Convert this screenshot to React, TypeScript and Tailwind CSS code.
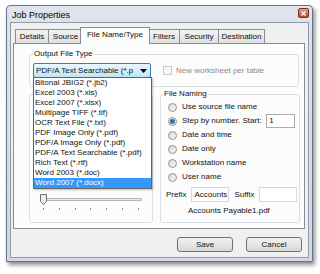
import React from "react"

const formats = [
  "Bitonal JBIG2 (*.jb2)",
  "Excel 2003 (*.xls)",
  "Excel 2007 (*.xlsx)",
  "Multipage TIFF  (*.tif)",
  "OCR Text File (*.txt)",
  "PDF Image Only (*.pdf)",
  "PDF/A Image Only (*.pdf)",
  "PDF/A Text Searchable (*.pdf)",
  "Rich Text (*.rtf)",
  "Word 2003 (*.doc)",
  "Word 2007 (*.docx)",
]

const naming = [
  "Use source file name",
  "Step by number. Start:",
  "Date and time",
  "Date only",
  "Workstation name",
  "User name",
]

function Radio({ checked }: { checked?: boolean }) {
  return (
    <div className="w-[9px] h-[9px] rounded-full border border-[#8f9192] bg-gradient-to-br from-[#d9d9d9] to-[#f7f7f7] flex items-center justify-center shrink-0">
      {checked && <div className="w-[5px] h-[5px] rounded-full bg-gradient-to-br from-[#2a5d8c] to-[#3d8bd0]" />}
    </div>
  )
}

function Tab({ label, w, last }: { label: string; w: string; last?: boolean }) {
  return (
    <div
      className={`${w} h-[14px] border-l border-t ${last ? "border-r" : ""} border-[#898c95] bg-gradient-to-b from-[#f3f3f3] to-[#dfdfdf] flex items-center justify-center`}
    >
      {label}
    </div>
  )
}

export default function App() {
  return (
    <div
      className="w-[320px] h-[274px] bg-white pl-[6px] pt-[5px] text-[8px] leading-[10px] text-[#111]"
      style={{ fontFamily: '"Liberation Sans", Arial, sans-serif' }}
    >
      <div className="w-[307px] h-[257px] border border-[#6a7184] rounded-t-[4px] bg-gradient-to-b from-[#dfe3ec] to-[#d3d8e4] shadow-[2px_3px_4px_rgba(0,0,0,0.45)] flex flex-col px-[3px] pb-[3px]">
        {/* Title bar */}
        <div className="h-[16px] flex items-start shrink-0">
          <span className="pl-[2px] mt-[4px] text-[9px] leading-[10px] text-black">Job Properties</span>
          <div className="ml-auto mt-[2px] w-[11px] h-[10px] rounded-[2px] border border-[#7b3024] bg-gradient-to-b from-[#e99a84] to-[#c4442c] flex items-center justify-center">
            <svg width="5" height="5" viewBox="0 0 5 5">
              <path d="M0.5 0.5 L4.5 4.5 M4.5 0.5 L0.5 4.5" stroke="white" strokeWidth="1.3" />
            </svg>
          </div>
        </div>

        {/* Client area */}
        <div className="flex-1 border border-[#8e99ab] bg-[#f0f0f0] flex flex-col pt-[4px] pl-[2px] pr-[3px] pb-[4px]">
          {/* Tabs */}
          <div className="h-[16px] flex items-end pl-[2px] shrink-0">
            <Tab label="Details" w="w-[33px]" />
            <Tab label="Source" w="w-[34px]" />
            <div className="relative z-10 -ml-[2px] -mr-[2px] -mb-px w-[70px] h-[17px] border-l border-t border-r border-[#898c95] bg-[#fcfcfc] flex items-center justify-center pb-[2px]">
              File Name/Type
            </div>
            <Tab label="Filters" w="w-[31px]" />
            <Tab label="Security" w="w-[39px]" />
            <Tab label="Destination" w="w-[47px]" last />
          </div>

          {/* Panel */}
          <div className="h-[186px] border border-[#898c95] bg-[#fcfcfc] pl-[15px] pr-[6px] pt-[5px] flex flex-col shrink-0">
            <fieldset className="w-[270px] h-[38px] border border-[#d5dfe5] rounded-[3px] px-[3px]">
              <legend className="px-px">Output File Type</legend>
              <div className="flex items-center mt-[4px]">
                <div className="relative z-20">
                  <div className="w-[118px] h-[15px] border border-[#3c7fb1] rounded-[2px] bg-gradient-to-b from-[#eaf6fd] to-[#bee6fd] flex items-center pl-[2px] pr-[3px]">
                    <span className="flex-1 whitespace-nowrap">PDF/A Text Searchable (*.p</span>
                    <svg width="7" height="4" viewBox="0 0 7 4" className="ml-[2px] shrink-0">
                      <path d="M0 0 H7 L3.5 4 Z" fill="#000" />
                    </svg>
                  </div>
                  <div className="absolute left-0 top-[14px] w-[119px] border border-[#646464] bg-white shadow-[1px_1px_2px_rgba(0,0,0,0.25)]">
                    {formats.map((f, i) => (
                      <div
                        key={f}
                        className={`h-[10px] pl-[1px] whitespace-nowrap ${i === formats.length - 1 ? "bg-[#3399ff] text-white" : ""}`}
                      >
                        {f}
                      </div>
                    ))}
                  </div>
                </div>
                <div className="ml-[12px] w-[9px] h-[9px] border border-[#c8c8c8] bg-[#f6f6f6]" />
                <span className="ml-[4px] text-[#8a8a8a]">New worksheet per table</span>
              </div>
            </fieldset>

            <div className="flex mt-[2px] gap-[7px]">
              <fieldset className="w-[124px] h-[134px] border border-[#d5dfe5] rounded-[3px] flex flex-col justify-end px-[10px] pb-[12px]">
                <legend className="px-px">&nbsp;</legend>
                <div className="relative h-[16px] w-[102px]">
                  <div className="absolute left-0 right-0 top-[4px] h-[3px] border border-[#b4b4b4] bg-[#e7eaea] rounded-[1px]" />
                  <svg width="7" height="11" viewBox="0 0 7 11" className="absolute left-[0px] top-0">
                    <path d="M0.5 0.5 H6.5 V7.5 L3.5 10.5 L0.5 7.5 Z" fill="#ececec" stroke="#707070" />
                  </svg>
                  <div className="absolute left-0 right-0 top-[14px] flex justify-between px-[3px]">
                    {Array.from({ length: 7 }).map((_, i) => (
                      <div key={i} className="w-px h-[2px] bg-[#8c8c8c]" />
                    ))}
                  </div>
                </div>
              </fieldset>

              <fieldset className="w-[139px] h-[134px] border border-[#d5dfe5] rounded-[3px] px-[2px]">
                <legend className="px-px">File Naming</legend>
                <div className="flex flex-col pt-px pl-[5px]">
                  {naming.map((n, i) => (
                    <div key={n} className="h-[14px] flex items-center">
                      <Radio checked={i === 1} />
                      <span className="ml-[5px]">{n}</span>
                      {i === 1 && (
                        <div className="ml-auto mr-[2px] w-[29px] h-[14px] border border-[#abadb3] bg-white pl-[2px] flex items-center">1</div>
                      )}
                    </div>
                  ))}
                </div>
                <div className="flex items-center mt-[3px] h-[15px] pl-[3px]">
                  <span>Prefix</span>
                  <div className="ml-[5px] w-[38px] h-[15px] border border-[#d7d9de] bg-white flex items-center pl-[2px]">Accounts</div>
                  <span className="ml-[5px]">Suffix</span>
                  <div className="ml-[5px] w-[38px] h-[15px] border border-[#d7d9de] bg-white" />
                </div>
                <div className="pl-[25px] mt-[4px]">Accounts Payable1.pdf</div>
              </fieldset>
            </div>
          </div>

          {/* Buttons */}
          <div className="flex justify-end gap-[13px] pr-[3px] mt-[8px]">
            <button className="w-[56px] h-[15px] border border-[#707070] rounded-[3px] bg-gradient-to-b from-[#f2f2f2] to-[#d8d8d8] text-[8px] leading-[10px]">
              Save
            </button>
            <button className="w-[56px] h-[15px] border border-[#707070] rounded-[3px] bg-gradient-to-b from-[#f2f2f2] to-[#d8d8d8] text-[8px] leading-[10px]">
              Cancel
            </button>
          </div>
        </div>
      </div>
    </div>
  )
}
